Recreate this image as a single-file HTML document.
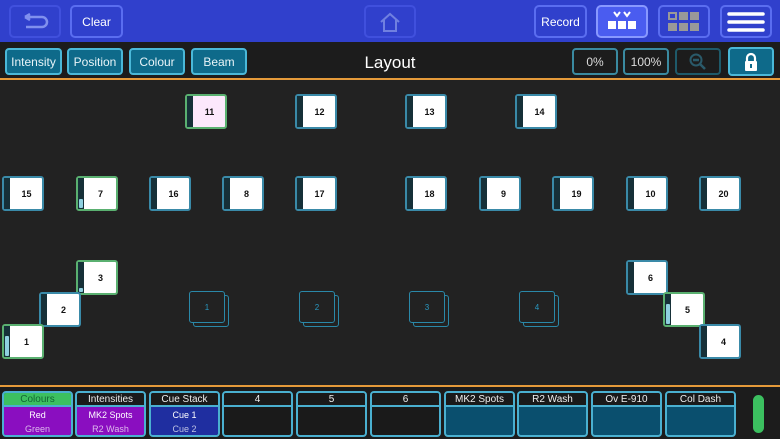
<!DOCTYPE html>
<html><head><style>
*{box-sizing:border-box;margin:0;padding:0}
body{width:780px;height:439px;background:#222;font-family:"Liberation Sans",sans-serif;position:relative;overflow:hidden}
.top{position:absolute;left:0;top:0;width:780px;height:42px;background:#3040cc}
.tb{position:absolute;border:2px solid #5a6df0;border-radius:5px;color:#fff;font-size:12px;display:flex;align-items:center;justify-content:center}
.bar2{position:absolute;left:0;top:42px;width:780px;height:38px;background:#1c1c1c;border-bottom:2px solid #e59a3a}
.pb{position:absolute;top:48px;height:27px;border:2px solid #4ab8d8;border-radius:4px;background:#0e6a8a;color:#e8f4f8;font-size:12px;display:flex;align-items:center;justify-content:center}
.db{position:absolute;top:48px;height:27px;border:2px solid #3a8aa0;border-radius:4px;background:#1c1c1c;color:#ddd;font-size:12px;display:flex;align-items:center;justify-content:center}
.f{position:absolute;width:42px;height:35px;border:2px solid #3a8aa8;border-radius:3px;background:#fff;font-size:9px;font-weight:bold;color:#111;display:flex;align-items:center;justify-content:center;padding-left:7px}
.f.g{border-color:#5ab070}
.f::before{content:"";position:absolute;left:0;top:0;bottom:0;width:6px;background:#163038}
.lv{position:absolute;left:1px;bottom:1px;width:4px;background:#8fd0e0;border-radius:1px;z-index:1}
.grp{position:absolute;width:36px;height:32px;border:1.5px solid #2a88a8;border-radius:3px;background:#222;color:#2a98c0;font-size:8px;display:flex;align-items:center;justify-content:center}
.bot{position:absolute;left:0;top:385px;width:780px;height:54px;background:#1c1c1c;border-top:2px solid #e59a3a}
.pl{position:absolute;top:391px;width:71px;height:46px;border:2px solid #4ab0d0;border-radius:4px;overflow:hidden;background:#0a4f6e}
.pl .h{height:14px;background:#1a1a1a;color:#eee;font-size:10px;text-align:center;line-height:14px;border-bottom:2px solid #4ab0d0}
.pl .c{color:#fff;font-size:9px;text-align:center;line-height:14px;padding-top:1px}
.pl .c span{display:block;opacity:.7}
</style></head><body>
<div class="top"></div>
<div class="tb" style="left:9px;top:5px;width:52px;height:33px;border-color:#4050dd"><svg width="30" height="18" viewBox="0 0 30 18"><path d="M5 4H22a5 5 0 0 1 0 10H6M5 4l5-3M5 4l5 3" fill="none" stroke="#8090ee" stroke-width="2.5"/></svg></div>
<div class="tb" style="left:70px;top:5px;width:53px;height:33px">Clear</div>
<div class="tb" style="left:364px;top:5px;width:52px;height:33px;border-color:#4050dd"><svg width="24" height="22" viewBox="0 0 24 22"><path d="M3 11L12 3l9 8M6 9v11h12V9" fill="none" stroke="#7080e0" stroke-width="2"/></svg></div>
<div class="tb" style="left:534px;top:5px;width:53px;height:33px">Record</div>
<div class="tb" style="left:596px;top:5px;width:52px;height:33px;background:#4a5cf0;border-color:#8898ff"><svg width="34" height="24" viewBox="0 0 34 24"><path d="M9 2l3 4 3-4M19 2l3 4 3-4" fill="none" stroke="#fff" stroke-width="2"/><rect x="3" y="11" width="8" height="8" fill="#fff"/><rect x="13" y="11" width="8" height="8" fill="#fff"/><rect x="23" y="11" width="8" height="8" fill="#fff"/></svg></div>
<div class="tb" style="left:658px;top:5px;width:52px;height:33px"><svg width="36" height="24" viewBox="0 0 36 24"><g fill="#999"><rect x="2" y="2" width="9" height="8"/><rect x="13" y="2" width="9" height="8"/><rect x="24" y="2" width="9" height="8"/><rect x="2" y="13" width="9" height="8"/><rect x="13" y="13" width="9" height="8"/><rect x="24" y="13" width="9" height="8"/></g><rect x="4" y="4" width="5" height="4" fill="#3040cc"/></svg></div>
<div class="tb" style="left:720px;top:5px;width:52px;height:33px"><svg width="40" height="22" viewBox="0 0 40 22"><g stroke="#fff" stroke-width="3.5" stroke-linecap="round"><path d="M3 3H37M3 11H37M3 19H37"/></g></svg></div>
<div class="bar2"></div>
<div class="pb" style="left:5px;width:57px">Intensity</div>
<div class="pb" style="left:67px;width:56px">Position</div>
<div class="pb" style="left:129px;width:56px">Colour</div>
<div class="pb" style="left:191px;width:56px">Beam</div>
<div style="position:absolute;left:340px;top:53px;width:100px;text-align:center;color:#fff;font-size:17px">Layout</div>
<div class="db" style="left:572px;width:46px">0%</div>
<div class="db" style="left:623px;width:46px">100%</div>
<div class="db" style="left:675px;width:46px;border-color:#1e5a6a"><svg width="20" height="20" viewBox="0 0 20 20"><circle cx="8" cy="8" r="5.5" fill="none" stroke="#2a5a6a" stroke-width="2"/><path d="M5 8h6M12 12l5 5" stroke="#2a5a6a" stroke-width="2.5"/></svg></div>
<div class="pb" style="left:728px;width:46px;height:29px;top:47px"><svg width="16" height="20" viewBox="0 0 16 20"><path d="M4 9V6a4 4 0 0 1 8 0v3" fill="none" stroke="#fff" stroke-width="2.2"/><rect x="2" y="9" width="12" height="10" rx="1" fill="#fff"/><rect x="7" y="12" width="2" height="4" fill="#0e6a8a"/></svg></div>

<div class="f g" style="left:185px;top:94px;background:#fce8fc">11</div>
<div class="f" style="left:295px;top:94px">12</div>
<div class="f" style="left:405px;top:94px">13</div>
<div class="f" style="left:515px;top:94px">14</div>

<div class="f" style="left:2px;top:176px">15</div>
<div class="f g" style="left:76px;top:176px"><i class="lv" style="height:9px"></i>7</div>
<div class="f" style="left:149px;top:176px">16</div>
<div class="f" style="left:222px;top:176px">8</div>
<div class="f" style="left:295px;top:176px">17</div>
<div class="f" style="left:405px;top:176px">18</div>
<div class="f" style="left:479px;top:176px">9</div>
<div class="f" style="left:552px;top:176px">19</div>
<div class="f" style="left:626px;top:176px">10</div>
<div class="f" style="left:699px;top:176px">20</div>

<div class="f g" style="left:76px;top:260px"><i class="lv" style="height:4px"></i>3</div>
<div class="f" style="left:39px;top:292px">2</div>
<div class="f g" style="left:2px;top:324px"><i class="lv" style="height:20px"></i>1</div>
<div class="f" style="left:626px;top:260px">6</div>
<div class="f g" style="left:663px;top:292px"><i class="lv" style="height:20px"></i>5</div>
<div class="f" style="left:699px;top:324px">4</div>

<div class="grp" style="left:193px;top:295px"></div><div class="grp" style="left:189px;top:291px">1</div>
<div class="grp" style="left:303px;top:295px"></div><div class="grp" style="left:299px;top:291px">2</div>
<div class="grp" style="left:413px;top:295px"></div><div class="grp" style="left:409px;top:291px">3</div>
<div class="grp" style="left:523px;top:295px"></div><div class="grp" style="left:519px;top:291px">4</div>

<div class="bot"></div>
<div class="pl" style="left:2px"><div class="h" style="background:#3cc060;color:#163">Colours</div><div class="c" style="background:#8a0ec0;height:30px">Red<span>Green</span></div></div>
<div class="pl" style="left:75px"><div class="h">Intensities</div><div class="c" style="background:#8a0ec0;height:30px">MK2 Spots<span>R2 Wash</span></div></div>
<div class="pl" style="left:149px"><div class="h">Cue Stack</div><div class="c" style="background:#1f2ea0;height:30px">Cue 1<span>Cue 2</span></div></div>
<div class="pl" style="left:222px;background:#1a1a1a"><div class="h">4</div></div>
<div class="pl" style="left:296px;background:#1a1a1a"><div class="h">5</div></div>
<div class="pl" style="left:370px;background:#1a1a1a"><div class="h">6</div></div>
<div class="pl" style="left:444px"><div class="h">MK2 Spots</div></div>
<div class="pl" style="left:517px"><div class="h">R2 Wash</div></div>
<div class="pl" style="left:591px"><div class="h">Ov E-910</div></div>
<div class="pl" style="left:665px"><div class="h">Col Dash</div></div>
<div style="position:absolute;left:753px;top:395px;width:11px;height:38px;border-radius:6px;background:#3cc060"></div>
</body></html>
